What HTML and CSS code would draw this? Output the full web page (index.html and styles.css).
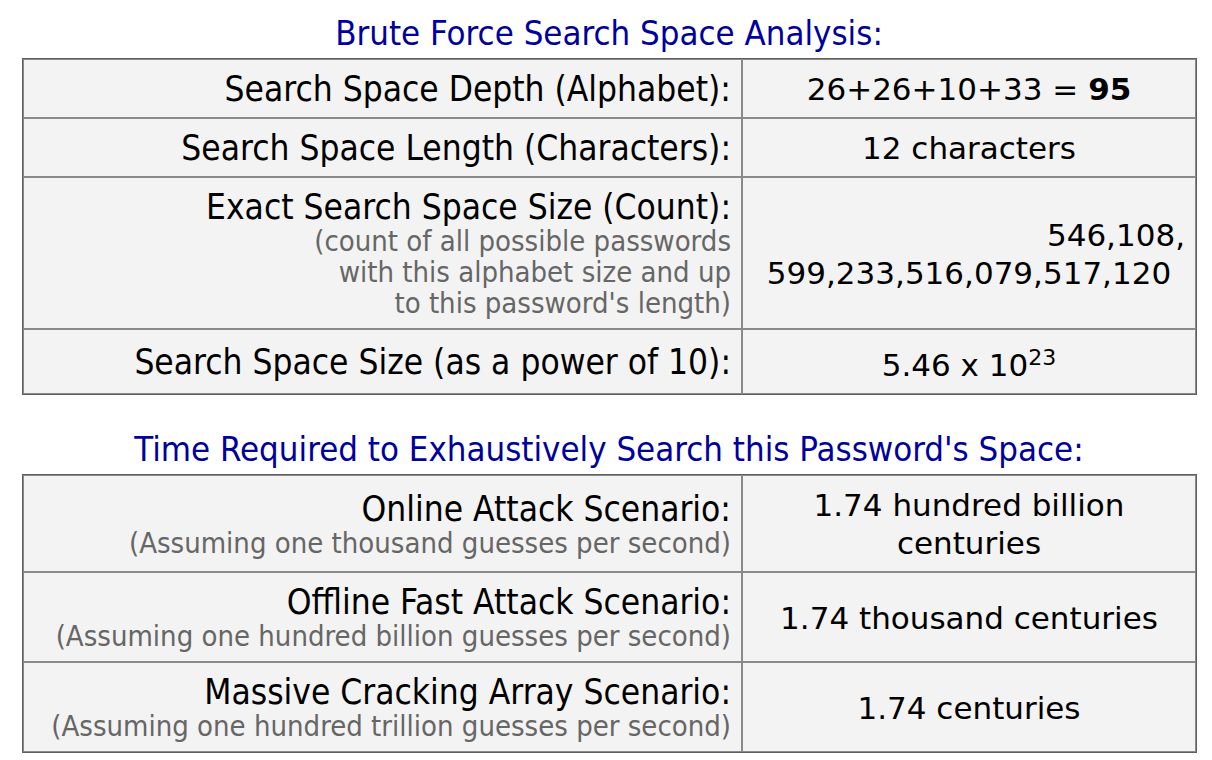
FILE: index.html
```html
<!DOCTYPE html>
<html>
<head>
  <title>Search Space Analysis</title>
  <link rel="stylesheet" href="styles.css">
</head>
<body>
  <div class="container">
    <h2 class="caption">Brute Force Search Space Analysis:</h2>
    <table class="stats">
      <tr>
        <td class="label">Search Space Depth (Alphabet):</td>
        <td class="value">26+26+10+33 = <b>95</b></td>
      </tr>
      <tr>
        <td class="label">Search Space Length (Characters):</td>
        <td class="value">12 characters</td>
      </tr>
      <tr>
        <td class="label">Exact Search Space Size (Count):
          <div class="note">(count of all possible passwords<br>with this alphabet size and up<br>to this password's length)</div>
        </td>
        <td class="value">
          <div class="count-top">546,108,</div>
          <div class="count-bottom">599,233,516,079,517,120</div>
        </td>
      </tr>
      <tr>
        <td class="label">Search Space Size (as a power of 10):</td>
        <td class="value">5.46 x 10<sup>23</sup></td>
      </tr>
    </table>

    <h2 class="caption">Time Required to Exhaustively Search this Password's Space:</h2>
    <table class="stats">
      <tr>
        <td class="label">Online Attack Scenario:
          <div class="note">(Assuming one thousand guesses per second)</div>
        </td>
        <td class="value">1.74 hundred billion centuries</td>
      </tr>
      <tr>
        <td class="label">Offline Fast Attack Scenario:
          <div class="note">(Assuming one hundred billion guesses per second)</div>
        </td>
        <td class="value">1.74 thousand centuries</td>
      </tr>
      <tr>
        <td class="label">Massive Cracking Array Scenario:
          <div class="note">(Assuming one hundred trillion guesses per second)</div>
        </td>
        <td class="value">1.74 centuries</td>
      </tr>
    </table>
  </div>
</body>
</html>
```

FILE: styles.css
```css
body {
  margin: 0;
  font-family: "DejaVu Sans", Verdana, sans-serif;
  background: #fff;
  color: #000;
}
.container {
  padding: 14px 16px 0 22px;
}
.caption {
  margin: 0 0 6px;
  text-align: center;
  font-family: "DejaVu Sans Condensed", "DejaVu Sans", sans-serif;
  font-size: 34.5px;
  font-weight: normal;
  line-height: 38px;
  color: #00009c;
}
.stats {
  width: 1175px;
  border-collapse: separate;
  border-spacing: 0;
  border: 1px solid #5f5f5f;
  margin-bottom: 35px;
}
.stats td {
  background: #f3f3f3;
  border: 1px solid #8a8a8a;
  padding: 10px 10px 9px;
  vertical-align: middle;
}
.label {
  width: 697px;
  text-align: right;
  font-family: "DejaVu Sans Condensed", "DejaVu Sans", sans-serif;
  font-size: 35px;
  line-height: 38px;
}
.note {
  font-size: 29px;
  line-height: 31px;
  color: #666;
}
.value {
  text-align: center;
  font-size: 31px;
  line-height: 38px;
}
.value sup {
  font-size: 22px;
  line-height: 36px;
}
.count-top {
  text-align: right;
}
.count-bottom {
  text-align: center;
}
```
